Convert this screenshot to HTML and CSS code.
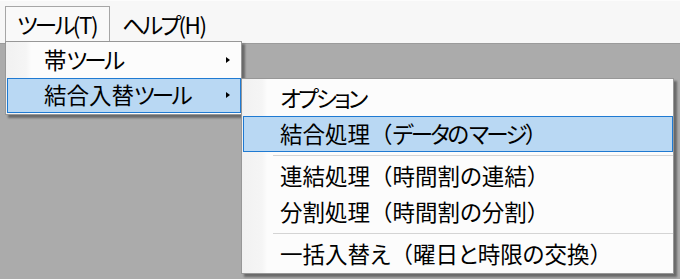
FILE: index.html
```html
<!DOCTYPE html>
<html lang="ja">
<head>
    <meta charset="UTF-8">
    <title>ツールメニュー</title>
    <link rel="stylesheet" href="styles.css">
</head>
<body>
    <div class="window">
        <div class="menubar">
            <div class="mb-item open"><span class="kt">ツール</span>(T)</div>
            <div class="mb-item"><span class="kt">ヘルプ</span>(H)</div>
        </div>

        <!-- ツール(T) drop-down -->
        <div class="menu menu-tools">
            <div class="mi">帯<span class="kt">ツール</span><span class="arrow"></span></div>
            <div class="mi active">結合入替<span class="kt">ツール</span><span class="arrow"></span></div>
        </div>

        <!-- 結合入替ツール cascade -->
        <div class="menu menu-merge">
            <div class="mi"><span class="kt">オプション</span></div>
            <div class="mi active">結合処理<span class="fw">（</span><span class="kt">データ</span>の<span class="kt">マージ</span><span class="fw">）</span></div>
            <div class="sep"></div>
            <div class="mi">連結処理<span class="fw">（</span>時間割の連結<span class="fw">）</span></div>
            <div class="mi">分割処理<span class="fw">（</span>時間割の分割<span class="fw">）</span></div>
            <div class="sep"></div>
            <div class="mi">一括入替え<span class="fw">（</span>曜日と時限の交換<span class="fw">）</span></div>
        </div>
    </div>
</body>
</html>
```

FILE: styles.css
```css
html, body { margin: 0; padding: 0; }
body {
    font-family: "Noto Sans CJK JP", "Noto Sans", sans-serif;
    font-size: 22.5px;
    font-feature-settings: "palt";
    color: #000;
    background: #ababab;
}

/* full-width brackets keep their full cell */
.fw { font-feature-settings: normal; }
/* katakana runs are set tighter, like the UI font */
.kt { letter-spacing: -2.7px; }

.window {
    position: relative;
    width: 680px;
    height: 279px;
    overflow: hidden;
    background: #ababab;
}

/* menu bar */
.menubar {
    display: flex;
    height: 44px;
    box-sizing: border-box;
    padding: 5px 0 0 5px;
    background: #f7f7f7;
    border-top: 1px solid #fcfcfc;
    border-bottom: 1px solid #9b9b9b;
}

.mb-item {
    display: flex;
    align-items: center;
    height: 38px;
    box-sizing: border-box;
    padding: 0 12px 3px 11px;
    border: 1px solid transparent;
    border-bottom: 0;
    line-height: 1;
    letter-spacing: -1.5px;
}

.mb-item.open {
    border-color: #a6a6a6;
    background: #f9f9f9;
}

/* drop-down menus */
.menu {
    position: absolute;
    box-sizing: border-box;
    padding: 1px 0 1px 1px;
    border: 1px solid #979797;
    background: linear-gradient(90deg, #f1f1f1 0, #f5f5f5 20px, #fafafa 24px, #fcfcfc 25px);
    box-shadow: 3px 3px 2px rgba(0, 0, 0, 0.38);
}

.menu-tools { left: 5px; top: 41px; width: 237px; }
.menu-merge { left: 241px; top: 78px; width: 433px; }

.mi {
    display: flex;
    align-items: center;
    height: 35px;
    box-sizing: border-box;
    padding: 0 0 2px 36px;
    border: 1px solid transparent;
    line-height: 1;
    white-space: nowrap;
}

.menu-merge .mi { height: 36px; }

.mi.active {
    background: #b9d8f3;
    border-color: #1f7ad2;
}

.arrow {
    margin-left: auto;
    margin-right: 10px;
    width: 0;
    height: 0;
    border-left: 4px solid #000;
    border-top: 3.5px solid transparent;
    border-bottom: 3.5px solid transparent;
}

.sep {
    height: 1px;
    margin: 3px 0 2px 30px;
    background: #d4d4d4;
}
```
